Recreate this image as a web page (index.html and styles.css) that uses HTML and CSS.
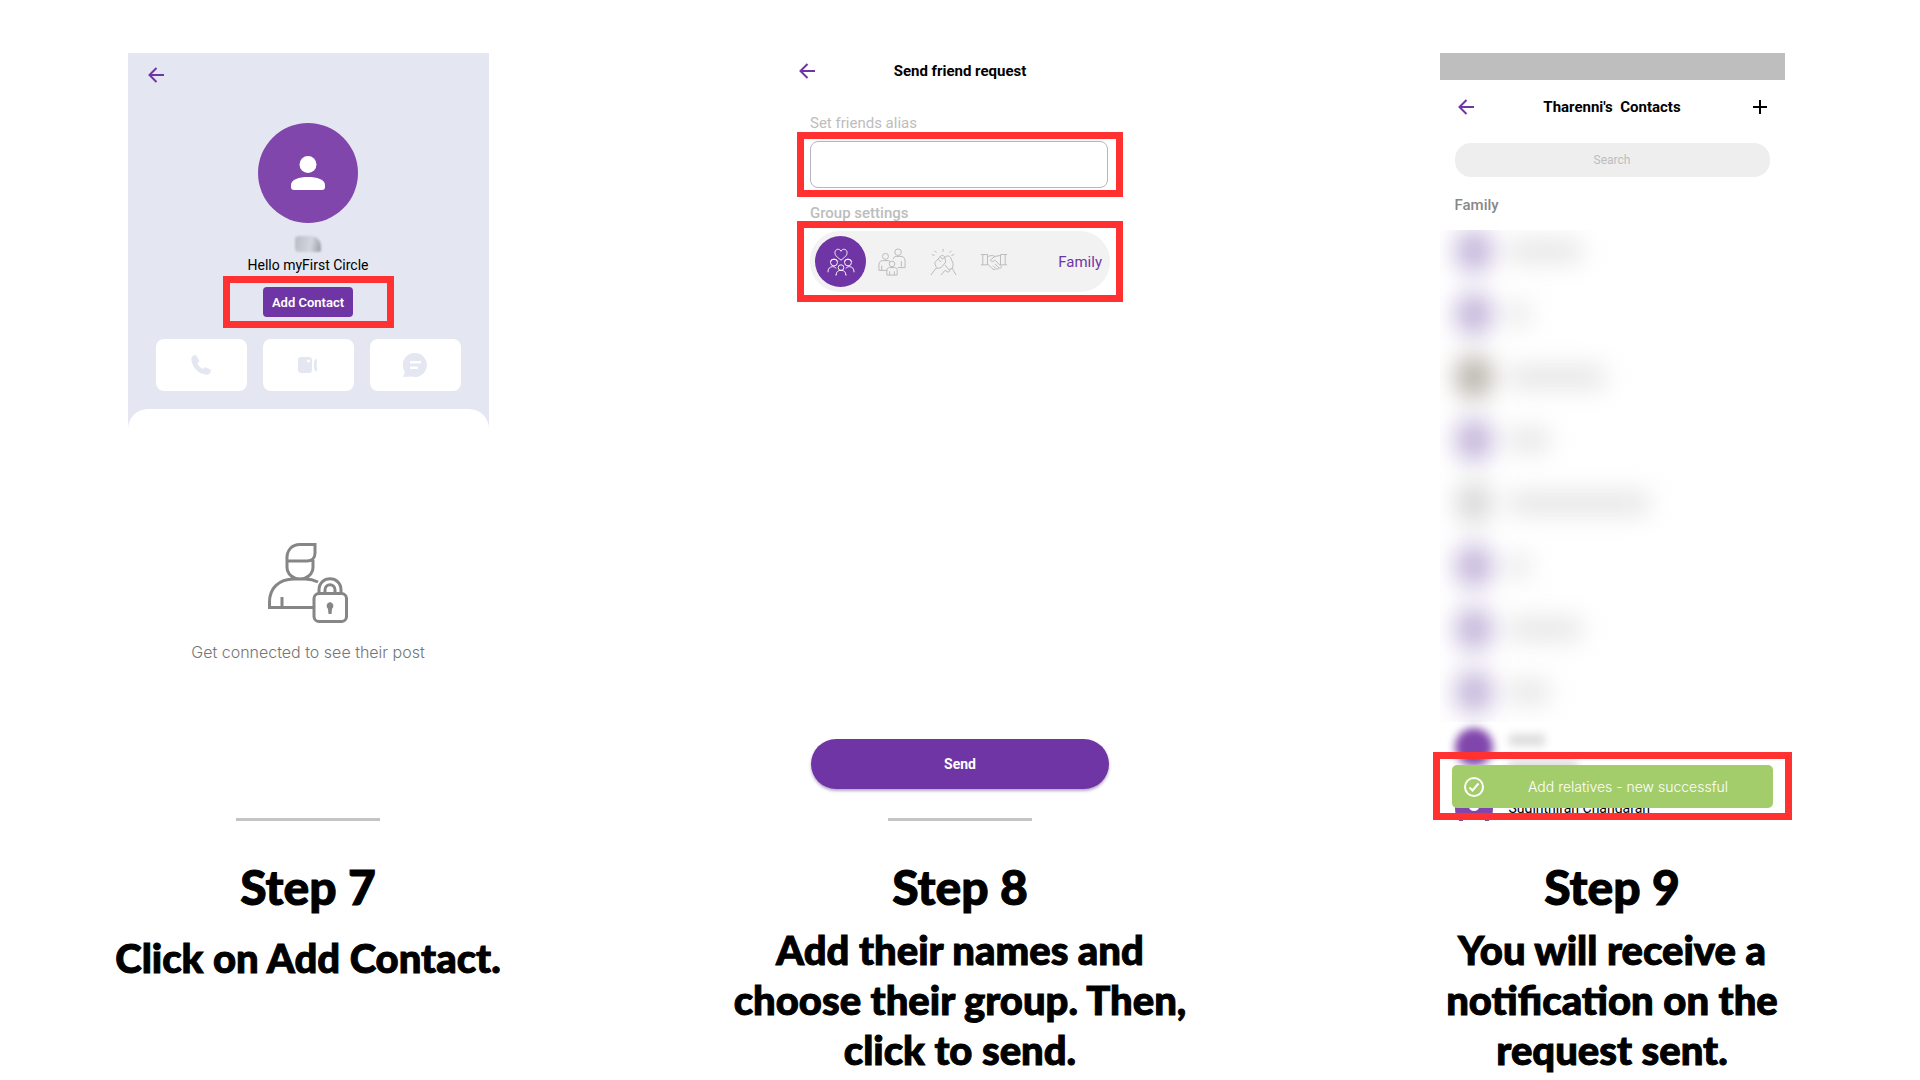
FILE: index.html
```html
<!DOCTYPE html>
<html lang="en">
<head>
  <meta charset="UTF-8">
  <meta name="viewport" content="width=device-width, initial-scale=1.0">
  <title>Add a contact - steps 7 to 9</title>
  <link rel="stylesheet" href="styles.css">
</head>
<body>
  <main class="steps">

    <section class="step">
      <div class="screen profile-screen">
        <div class="profile">
          <button class="icon-button" aria-label="Back">
            <svg class="arrow" viewBox="0 0 16 16"><path d="M8.5 1 1.5 8l7 7M1.5 8H16"/></svg>
          </button>
          <div class="avatar">
            <svg viewBox="0 0 34 34"><circle cx="17" cy="8.5" r="8.5"/><path d="M0 31v-2c0-5.500 8-8 17-8s17 2.500 17 8v2q0 3-3 3H3q-3 0-3-3z"/></svg>
          </div>
          <div class="hidden-name"></div>
          <p class="greeting">Hello myFirst Circle</p>
          <div class="highlight add-highlight">
            <button class="add-button">Add Contact</button>
          </div>
          <div class="actions">
            <button aria-label="Call">
              <svg viewBox="0 0 24 24"><path d="M4.500 2.500 7 2l3.500 6-2 2.500c1 2.500 3 4.500 5.500 5.500l2.500-2 5.500 3-.5 2.500c-1 2-3 2.500-5.500 2C9 20 4 15 2.500 8 2 5.500 2.500 3.500 4.500 2.500z"/></svg>
            </button>
            <button aria-label="Video call">
              <svg viewBox="0 0 24 24"><path fill-rule="evenodd" d="M5 4h8q3 0 3 3v10q0 3-3 3H5q-3 0-3-3V7q0-3 3-3zm7.500 2.500a1.500 1.500 0 1 0 0 3 1.500 1.500 0 0 0 0-3z"/><path d="M18 9q0-2 3-3.500V8q-1 4 0 8v2.500q-3-1-3-3.500z"/></svg>
            </button>
            <button aria-label="Message">
              <svg viewBox="0 0 24 24"><path fill-rule="evenodd" d="M12 0a12 12 0 1 1-3.500 23.500L0 24l2-5A12 12 0 0 1 12 0zM7 8v2.500h11V8zm0 5.500V16h8v-2.500z"/></svg>
            </button>
          </div>
        </div>
        <div class="locked">
          <svg viewBox="0 0 80 80">
            <path d="M19 17v7c0 7 6 12 13 12s13-5 13-12v-7M19 18C18 7 24 1.500 32 1.500h15V10c0 5-3 8-8 8zM50 39c-4-2-8-3-13-3H26C10 36 1.500 46 1.500 59v5.500H45M14 54v10"/>
            <rect x="46" y="50.500" width="32.500" height="28" rx="5"/>
            <path d="M51 50v-3c0-15 22-15 22 0v3M57 50v-3c0-7 10-7 10 0v3"/>
            <path class="keyhole" d="M62 59a4 4 0 0 1 2 7l-.5 5h-3l-.5-5a4 4 0 0 1 2-7z"/>
          </svg>
          <p>Get connected to see their post</p>
        </div>
      </div>
      <h2>Step 7</h2>
      <p class="caption caption-single">Click on Add Contact.</p>
    </section>

    <section class="step">
      <form class="screen request-screen" onsubmit="return false">
        <header class="bar">
          <button class="icon-button" type="button" aria-label="Back">
            <svg class="arrow" viewBox="0 0 16 16"><path d="M8.5 1 1.5 8l7 7M1.5 8H16"/></svg>
          </button>
          <h3>Send friend request</h3>
        </header>
        <label class="field-label" for="alias">Set friends alias</label>
        <div class="highlight field-highlight">
          <input class="alias" id="alias" type="text">
        </div>
        <p class="field-label group-label">Group settings</p>
        <div class="highlight field-highlight group-highlight">
          <div class="groups">
            <button class="group selected" type="button" aria-label="Family">
              <svg viewBox="0 0 30 30"><path d="M15 13C11 10 8.500 8 8.500 5c0-4 5-5 6.500-1.500C16.500 0 21.500 1 21.500 5c0 3-2.500 5-6.500 8zM3.500 14.500c1-3 7-3 8 0M18.500 14.500c1-3 7-3 8 0M1 26c0-4 2-6 5-6 2 0 3 1 4 2M29 26c0-4-2-6-5-6-2 0-3 1-4 2M10 29c0-4 2-5 5-5s5 1 5 5M10 29H9M20 29h1"/><circle cx="7.500" cy="15.500" r="3.700"/><circle cx="22.500" cy="15.500" r="3.700"/><circle cx="15" cy="21" r="3"/></svg>
            </button>
            <button class="group" type="button" aria-label="Relatives">
              <svg viewBox="0 0 30 30"><circle cx="8" cy="9" r="3.200"/><circle cx="21.500" cy="4.500" r="3.500"/><circle cx="15" cy="17" r="3"/><path d="M10 24H1v-6c0-3 2-4.500 4-4.500h6l2 1M4 24v-5M16.500 12c0-2 1.500-3 3-3h5c3 0 4.500 2 4.500 5v7h-8M25 20v-6M9.500 29v-5c0-2 1-3 3-3h5c2 0 3 1 3 3v5zM12.500 29v-4M17.500 29v-4"/></svg>
            </button>
            <button class="group" type="button" aria-label="Friends">
              <svg viewBox="0 0 30 30"><path d="M15 1v3M6 3l2 2M24 3l-2 2M3 7l3 1M27 7l-3 1M2 29l6-8-2-5 6-7c2-2 5-1 5 2l1 4-5 6-5 1M12 9l2 3 3-2M17 10c1-2 5-2 6 0l3 7-1 5-4 1-4-5M25 22l4 7M13 29l4-5 4 2 2-3M10 12l3 3"/></svg>
            </button>
            <button class="group" type="button" aria-label="Others">
              <svg viewBox="0 0 30 30"><path d="M1 7h7v11H1M3 7v11M29 7h-7v11h7M27 7v11M8 9l5-1 3 1 6-1M16 9l-5 4c1 2 3 2 5 0l7 7c0 2-2 2-3 1l-4-4M20 21c0 2-2 2-3 1l-3-3M17 22c-1 2-3 1-4 0l-5-5"/></svg>
            </button>
            <span class="group-name">Family</span>
          </div>
        </div>
        <button class="send" type="submit">Send</button>
      </form>
      <h2>Step 8</h2>
      <p class="caption">Add their names and<br>choose their group. Then,<br>click to send.</p>
    </section>

    <section class="step">
      <div class="screen contacts-screen">
        <div class="status-bar"></div>
        <header class="bar contacts-bar">
          <button class="icon-button" aria-label="Back">
            <svg class="arrow" viewBox="0 0 16 16"><path d="M8.5 1 1.5 8l7 7M1.5 8H16"/></svg>
          </button>
          <h3>Tharenni's&nbsp; Contacts</h3>
          <button class="icon-button" aria-label="Add">
            <svg class="plus" viewBox="0 0 14 14"><path d="M7 0v14M0 7h14"/></svg>
          </button>
        </header>
        <input class="search" type="text" placeholder="Search" aria-label="Search">
        <h4>Family</h4>
        <ul class="contacts">
          <li><i class="dot"></i><i class="name medium"></i></li>
          <li><i class="dot"></i><i class="name tiny"></i></li>
          <li><i class="dot brown"></i><i class="name wide"></i></li>
          <li><i class="dot"></i><i class="name short"></i></li>
          <li><i class="dot grey"></i><i class="name widest"></i></li>
          <li><i class="dot"></i><i class="name tiny"></i></li>
          <li><i class="dot"></i><i class="name medium"></i></li>
          <li><i class="dot"></i><i class="name short"></i></li>
        </ul>
        <div class="contact veiled">
          <i class="dot"></i>
          <div><i class="name"></i><i class="name medium"></i></div>
        </div>
        <div class="contact last">
          <i class="dot"><svg viewBox="0 0 34 34"><circle cx="17" cy="8.500" r="8.500"/><path d="M0 31v-2c0-5.500 8-8 17-8s17 2.500 17 8v2q0 3-3 3H3q-3 0-3-3z"/></svg></i>
          <span>Suginthiran Chandaran</span>
        </div>
        <div class="highlight toast-highlight">
          <div class="toast" role="status">
            <svg viewBox="0 0 20 20"><circle cx="10" cy="10" r="9"/><path d="m5.500 10.500 3 3 6-7"/></svg>
            <span>Add relatives - new successful</span>
          </div>
        </div>
      </div>
      <h2>Step 9</h2>
      <p class="caption">You will receive a<br>notification on the<br>request sent.</p>
    </section>

  </main>
</body>
</html>
```
FILE: styles.css
```css
* {
  box-sizing: border-box;
}
body {
  margin: 0;
  background: white;
  color: black;
  font-family: Roboto, sans-serif;
  font-size: 14px;
}
h2, h3, h4, p, ul {
  margin: 0;
  padding: 0;
}
button {
  border: none;
  padding: 0;
  font-family: inherit;
  cursor: pointer;
}
svg {
  display: block;
}
.steps {
  display: grid;
  grid-template-columns: repeat(3, 1fr);
  column-gap: 172px;
  padding: 53px 68px 0;
}
.step {
  display: flex;
  flex-direction: column;
  align-items: center;
  text-align: center;
}
.step h2,
.caption {
  font-family: Lato, sans-serif;
  font-weight: 900;
  -webkit-text-stroke: 1px black;
}
.step h2 {
  font-size: 48px;
  line-height: 60px;
  margin-top: 36px;
}
.caption {
  font-size: 40px;
  line-height: 50px;
  margin-top: 8px;
  white-space: nowrap;
}
.caption-single {
  margin-top: 16px;
}
.screen {
  position: relative;
  display: flex;
  flex-direction: column;
  width: 100%;
  max-width: 361px;
  min-height: 768px;
}
.profile-screen::after,
.request-screen::after {
  content: "";
  width: 144px;
  height: 3px;
  margin: auto auto 0;
  background: #c4c4c4;
}
.highlight {
  border: 7px solid #ff3131;
}
.icon-button {
  background: none;
}
.arrow {
  width: 16px;
  height: 16px;
  fill: none;
  stroke: #6f35a5;
  stroke-width: 2;
}

/* Step 7 */
.profile {
  display: flex;
  flex-direction: column;
  align-items: center;
  padding: 14px 20px 0;
  background: #e4e7f1;
}
.profile .icon-button {
  align-self: flex-start;
}
.profile::after {
  content: "";
  align-self: stretch;
  height: 20px;
  margin: 18px -20px 0;
  background: white;
  border-radius: 20px 20px 0 0;
}
.avatar {
  display: flex;
  align-items: center;
  justify-content: center;
  width: 100px;
  height: 100px;
  margin-top: 40px;
  border-radius: 50%;
  background: #8146ac;
}
.avatar svg {
  width: 34px;
  fill: white;
}
.hidden-name {
  width: 26px;
  height: 16px;
  margin-top: 13px;
  border-radius: 4px 10px 2px 4px;
  background: linear-gradient(100deg, #b9bcc4, #d3d6de 60%, #9a9ca4);
  filter: blur(1px);
}
.greeting {
  line-height: 20px;
  margin-top: 3px;
}
.add-highlight {
  width: 171px;
  margin-top: 1px;
  padding: 4px;
}
.add-button {
  width: 90px;
  height: 30px;
  border-radius: 4px;
  background: #6f35a5;
  color: white;
  font-size: 13px;
  font-weight: 600;
}
.actions {
  display: grid;
  grid-template-columns: repeat(3, 1fr);
  gap: 16px;
  align-self: stretch;
  margin: 11px 8px 0;
}
.actions button {
  display: flex;
  align-items: center;
  justify-content: center;
  height: 52px;
  border-radius: 8px;
  background: white;
}
.actions svg {
  width: 24px;
  fill: #e4e7f1;
}
.locked {
  display: flex;
  flex-direction: column;
  align-items: center;
  margin-top: 114px;
  color: #757575;
  font-family: Inter, sans-serif;
  font-size: 16px;
  font-weight: 300;
}
.locked svg {
  width: 80px;
  margin-bottom: 19px;
  fill: none;
  stroke: #868686;
  stroke-width: 3;
}
.locked .keyhole {
  fill: #868686;
  stroke: none;
}
.locked p {
  line-height: 20px;
}

/* Step 8 */
.bar {
  display: grid;
  grid-template-columns: 16px 1fr 16px;
  align-items: center;
  height: 36px;
  padding: 0 2px;
}
.bar h3 {
  font-size: 15px;
  font-weight: 700;
}
.request-screen {
  max-width: 326px;
}
.field-label {
  margin: 25px 13px 0;
  color: #bdbdbd;
  font-size: 15px;
  line-height: 18px;
  text-align: left;
}
.field-highlight {
  padding: 2px 8px 2px 6px;
}
.alias {
  display: block;
  width: 100%;
  height: 47px;
  padding: 0 12px;
  border: 1px solid #b9b3c4;
  border-radius: 8px;
  font: inherit;
}
.group-label {
  margin-top: 7px;
  height: 17px;
  font-weight: 500;
}
.group-highlight {
  padding: 3px 6px;
}
.groups {
  display: flex;
  align-items: center;
  height: 61px;
  padding: 0 8px 0 5px;
  border-radius: 30px;
  background: #f2f2f2;
}
.group {
  display: flex;
  align-items: center;
  justify-content: center;
  width: 51px;
  height: 51px;
  border-radius: 50%;
  background: none;
}
.group svg {
  width: 28px;
  fill: none;
  stroke: #b8b8b8;
  stroke-width: 1;
}
.group.selected {
  background: #6f35a5;
}
.group.selected svg {
  stroke: white;
}
.group-name {
  margin-left: auto;
  color: #6f35a5;
  font-size: 15px;
}
.send {
  height: 50px;
  margin: 437px 14px 0;
  border-radius: 25px;
  background: #6f35a5;
  box-shadow: 0 2px 3px rgba(80, 40, 120, 0.4);
  color: white;
  font-size: 14px;
  font-weight: 700;
}

/* Step 9 */
.contacts-screen {
  max-width: 345px;
}
.status-bar {
  height: 27px;
  background: #bebebe;
}
.contacts-bar {
  height: 54px;
  padding: 0 18px;
}
.plus {
  width: 14px;
  height: 14px;
  margin-left: 2px;
  stroke: black;
  stroke-width: 2;
}
.search {
  height: 34px;
  margin: 9px 15px 0;
  border: none;
  border-radius: 16px;
  background: #eeeeee;
  font-family: inherit;
  font-size: 12px;
  text-align: center;
}
.search::placeholder {
  color: #bdbdbd;
}
.contacts-screen h4 {
  margin: 18px 15px 0;
  color: #888888;
  font-size: 15px;
  font-weight: 500;
  line-height: 20px;
  text-align: left;
}
.contacts {
  height: 492px;
  padding: 1px 15px 0;
  margin-top: 15px;
  overflow: hidden;
  list-style: none;
}
.contacts li {
  display: flex;
  align-items: center;
  gap: 16px;
  height: 40px;
  margin-bottom: 23px;
  filter: blur(12px);
}
.dot {
  flex: none;
  width: 38px;
  height: 38px;
  border-radius: 50%;
  background: #8146ac;
}
.contacts .dot {
  height: 44px;
  background: #c3b4da;
}
.contacts .brown {
  background: #b9b3ab;
}
.contacts .grey {
  background: #d8dad8;
}
.name {
  display: block;
  width: 36px;
  height: 24px;
  background: #e6e6e6;
}
.tiny {
  width: 20px;
}
.short {
  width: 40px;
}
.medium {
  width: 72px;
}
.wide {
  width: 96px;
}
.widest {
  width: 140px;
}
.contact {
  display: flex;
  align-items: flex-start;
  gap: 16px;
  padding: 0 15px;
}
.contact span {
  line-height: 16px;
  margin-top: 10px;
}
.contact svg {
  width: 22px;
  margin: 10px auto;
  fill: white;
}
.veiled {
  height: 62px;
  margin-top: 6px;
  filter: blur(4px);
}
.veiled .name {
  height: 12px;
  margin-top: 6px;
  background: #dddddd;
}
.veiled .medium {
  width: 68px;
  margin-top: 14px;
}
.last {
  height: 31px;
  overflow: hidden;
}
.toast-highlight {
  position: absolute;
  right: -7px;
  bottom: 1px;
  left: -7px;
  padding: 6px 12px 5px;
}
.toast {
  display: flex;
  align-items: center;
  height: 43px;
  padding: 0 12px;
  border-radius: 5px;
  background: #a3cd6b;
  color: white;
  font-family: Inter, sans-serif;
  font-weight: 300;
}
.toast svg {
  flex: none;
  width: 20px;
  fill: none;
  stroke: white;
  stroke-width: 2;
}
.toast span {
  flex: 1;
  padding-left: 12px;
}
```
